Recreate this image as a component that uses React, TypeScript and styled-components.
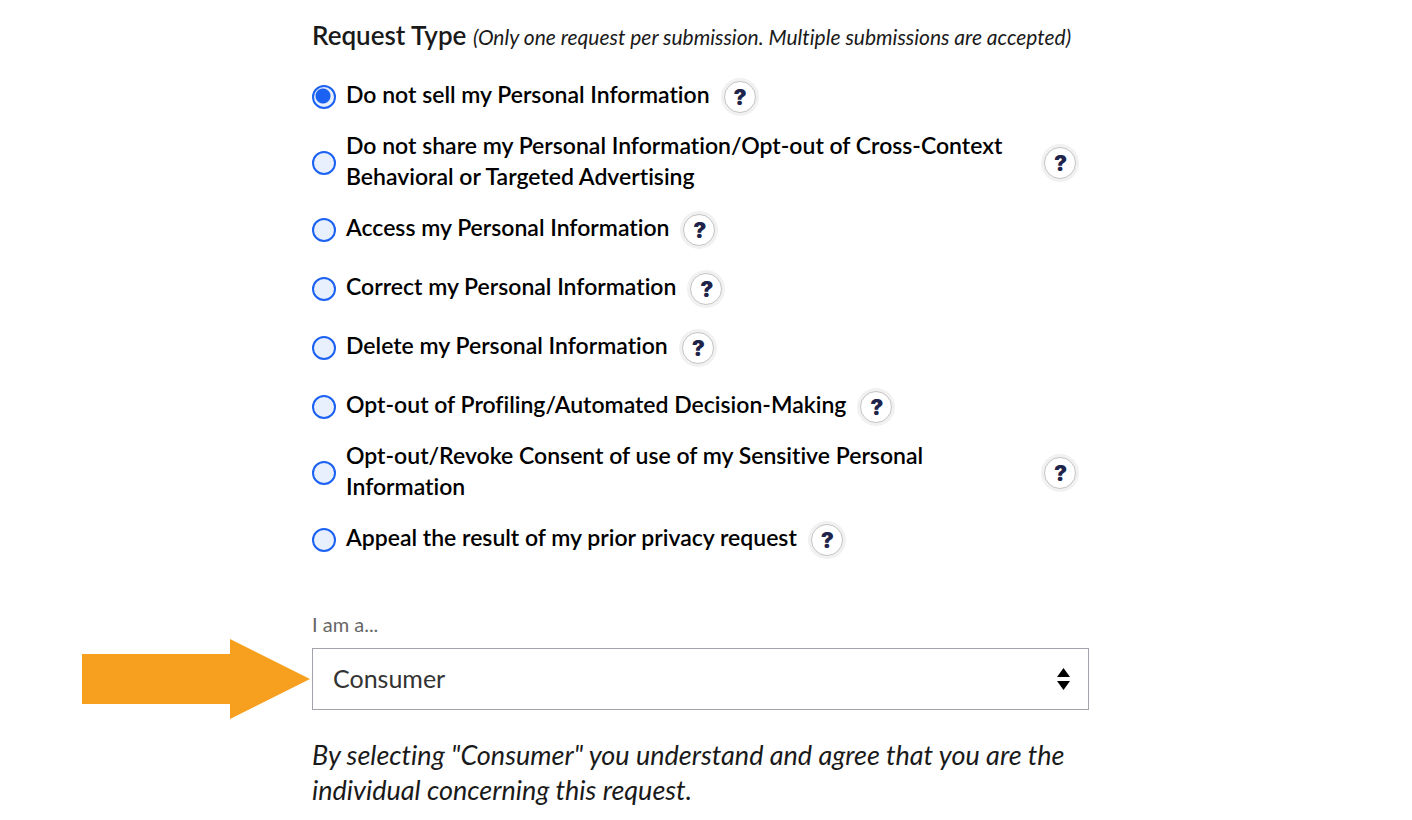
import React, { useState } from "react";
import styled, { createGlobalStyle } from "styled-components";

const GlobalStyle = createGlobalStyle`
  *, *::before, *::after { box-sizing: border-box; }
  body {
    margin: 0;
    background: #fff;
    color: #000;
    font-family: Lato, "Liberation Sans", sans-serif;
    font-variant-ligatures: none;
  }
`;

const Page = styled.main`
  display: flex;
  justify-content: center;
  padding: 17px 11px 0 0;
`;

const Form = styled.form`
  width: 100%;
  max-width: 777px;
`;

const Group = styled.fieldset`
  margin: 0;
  padding: 0;
  border: 0;
  min-width: 0;
`;

const Legend = styled.legend`
  padding: 0;
  margin-bottom: 16px;
  font-size: 26px;
  line-height: 37px;
  font-weight: 600;
  color: #1a1a1a;
`;

const Hint = styled.em`
  font-size: 21px;
  font-weight: 400;
`;

const Options = styled.div`
  display: flex;
  flex-direction: column;
  gap: 8px;
  padding-right: 13px;
`;

const OptionRow = styled.div`
  display: flex;
  align-items: center;
  min-height: 51px;
`;

const Radio = styled.input`
  appearance: none;
  flex: none;
  width: 24px;
  height: 24px;
  margin: 0 10px 0 0;
  border: 2px solid #1b62f2;
  border-radius: 50%;
  background: #e8effd;
  cursor: pointer;

  &:checked {
    background: radial-gradient(circle at 9px 9px, #1b62f2 7px, #e8effd 8px);
  }
`;

const OptionLabel = styled.label`
  padding-bottom: 4px;
  font-size: 23px;
  line-height: 31px;
  font-weight: 600;
  cursor: pointer;
`;

const HelpButton = styled.button`
  flex: none;
  width: 32px;
  height: 32px;
  margin-left: 14px;
  padding: 0 0 0 1px;
  border: 1px solid #c4c4c4;
  border-radius: 50%;
  background: #fff;
  box-shadow: 0 0 0 3px #f1f1f1;
  color: #20244a;
  font-family: Inter, sans-serif;
  font-size: 22px;
  line-height: 30px;
  font-weight: 900;
  cursor: pointer;
`;

const Field = styled.div`
  margin-top: 46px;
`;

const FieldLabel = styled.label`
  display: block;
  margin-bottom: 11px;
  font-size: 20px;
  line-height: 26px;
  color: #666;
`;

const SelectBox = styled.div`
  position: relative;
`;

const Select = styled.select`
  appearance: none;
  display: block;
  width: 100%;
  height: 62px;
  padding: 0 48px 2px 20px;
  border: 1px solid #a3a3ab;
  border-radius: 0;
  background: #fff;
  color: #333;
  font-family: inherit;
  font-size: 25px;
`;

const SelectArrows = styled.svg`
  position: absolute;
  top: 20px;
  right: 19px;
  pointer-events: none;
`;

const Pointer = styled.svg`
  position: absolute;
  top: -9px;
  right: 100%;
  margin-right: 2px;
`;

const Note = styled.p`
  margin: 27px 0 0;
  font-size: 27px;
  line-height: 35px;
  font-style: italic;
  color: #1a1a1a;
`;

const requestTypes = [
  "Do not sell my Personal Information",
  "Do not share my Personal Information/Opt-out of Cross-Context Behavioral or Targeted Advertising",
  "Access my Personal Information",
  "Correct my Personal Information",
  "Delete my Personal Information",
  "Opt-out of Profiling/Automated Decision-Making",
  "Opt-out/Revoke Consent of use of my Sensitive Personal Information",
  "Appeal the result of my prior privacy request",
];

export default function App() {
  const [selected, setSelected] = useState(0);

  return (
    <>
      <GlobalStyle />
      <Page>
        <Form>
          <Group>
            <Legend>
              Request Type{" "}
              <Hint>(Only one request per submission. Multiple submissions are accepted)</Hint>
            </Legend>
            <Options>
              {requestTypes.map((text, i) => (
                <OptionRow key={text}>
                  <Radio
                    type="radio"
                    name="request-type"
                    id={`request-${i}`}
                    checked={selected === i}
                    onChange={() => setSelected(i)}
                  />
                  <OptionLabel htmlFor={`request-${i}`}>{text}</OptionLabel>
                  <HelpButton type="button">?</HelpButton>
                </OptionRow>
              ))}
            </Options>
          </Group>
          <Field>
            <FieldLabel htmlFor="role">I am a...</FieldLabel>
            <SelectBox>
              <Pointer width="228" height="80" viewBox="0 0 228 80" aria-hidden="true">
                <path d="M0 15H148V0L228 40L148 80V65H0Z" fill="#f7a01f" />
              </Pointer>
              <Select id="role" defaultValue="Consumer">
                <option>Consumer</option>
              </Select>
              <SelectArrows width="13" height="22" viewBox="0 0 13 22" aria-hidden="true">
                <path d="M6.5 0L13 9H0ZM6.5 22L0 13H13Z" fill="#000" />
              </SelectArrows>
            </SelectBox>
          </Field>
          <Note>
            By selecting "Consumer" you understand and agree that you are the individual
            concerning this request.
          </Note>
        </Form>
      </Page>
    </>
  );
}
